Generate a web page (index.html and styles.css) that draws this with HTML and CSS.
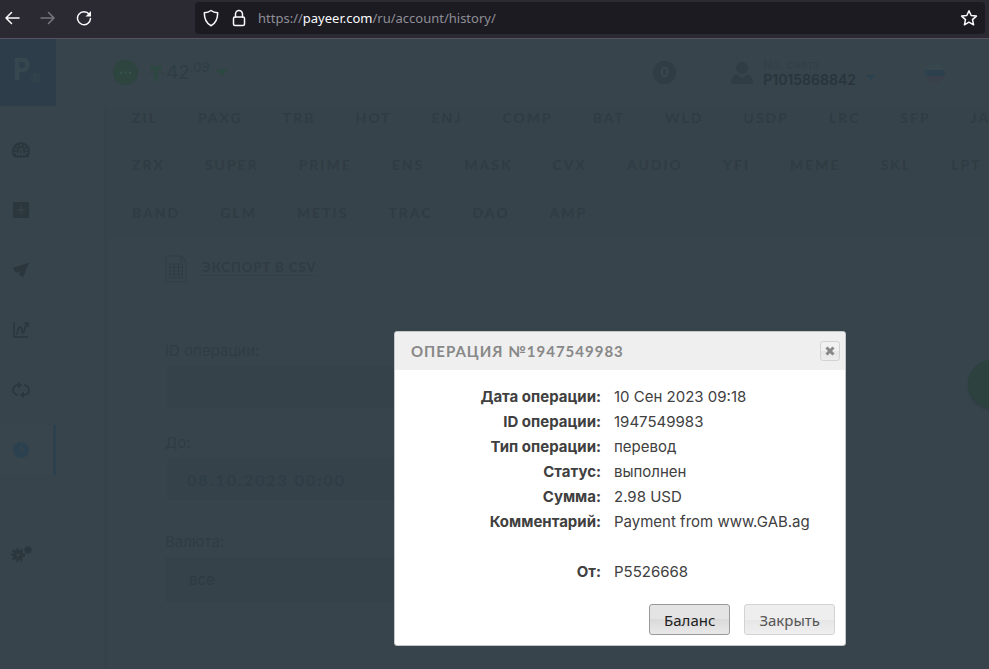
FILE: index.html
```
<!DOCTYPE html>
<html lang="ru">
<head>
<meta charset="utf-8">
<title>История операций</title>
<link rel="stylesheet" href="styles.css">
</head>
<body>
<header class="browser">
  <button class="nav-btn" aria-label="Назад"><svg width="16" height="16" viewBox="0 0 16 16"><path d="M15 8H2M7.500 2.500 2 8l5.500 5.500"/></svg></button>
  <button class="nav-btn nav-off" aria-label="Вперёд"><svg width="16" height="16" viewBox="0 0 16 16"><path d="M1 8h13M8.500 2.500 14 8l-5.500 5.500"/></svg></button>
  <button class="nav-btn" aria-label="Обновить"><svg width="16" height="16" viewBox="0 0 16 16"><path d="M13.200 4.300A6.500 6.500 0 1 0 14.500 8.500"/><path class="solid" d="M15 1v5.500H9.500z"/></svg></button>
  <div class="address">
    <svg width="18" height="18" viewBox="0 0 18 18"><path d="M9 1.500c2 1.500 4.300 2.100 6.700 2.300 0 6-1.700 10.500-6.700 12.900C4 14.300 2.300 9.800 2.300 3.800 4.700 3.600 7 3 9 1.500z"/></svg>
    <svg width="18" height="18" viewBox="0 0 18 18"><rect x="3.500" y="8" width="11" height="8.500" rx="1.500"/><path d="M5.500 8V5a3.500 3.500 0 0 1 7 0v3"/></svg>
    <span class="url">https://<b>payeer.com</b>/ru/account/history/</span>
    <button class="star" aria-label="В закладки"><svg width="18" height="18" viewBox="0 0 18 18"><path d="m9 1.700 2.200 4.800 5.200.6-3.900 3.500 1.100 5.200L9 13.200l-4.600 2.600 1.100-5.200L1.600 7.100l5.200-.6z"/></svg></button>
  </div>
</header>

<div class="app">
  <aside class="side">
    <a class="logo" href="#" aria-label="Payeer"><span>P</span><small>®</small></a>
    <nav class="menu">
      <a href="#" aria-label="Баланс"><svg width="18" height="16" viewBox="0 0 18 16"><path d="M9 0a9 9 0 0 0-9 9c0 3 1 5 2 6.500h14c1-1.500 2-3.500 2-6.500a9 9 0 0 0-9-9z"/><path class="cut wide" d="M9 2v2.500M5 3.500l1 2M13 3.500l-1 2M2 7l3 .8M16 7l-3 .8M2 10.500h3M16 10.500h-3M8.300 6 7 12h4L9.700 6M4 12.500h10"/></svg></a>
      <a href="#" aria-label="Пополнить"><svg width="16" height="16" viewBox="0 0 16 16"><rect width="16" height="16" rx="1"/><path class="cut" d="M8 4v8M4 8h8"/></svg></a>
      <a href="#" aria-label="Перевести"><svg width="16" height="16" viewBox="0 0 16 16"><path d="M16 .5 0 6l2.500 4.500L7 9.500 6 12.500l4 3z"/></svg></a>
      <a href="#" aria-label="Торги"><svg width="17" height="16" viewBox="0 0 17 16"><path class="line" d="M1 0v15h14M3 12c3 0 1-7 4-7s1 6 3 6 1-8 4-9M11.500 1H15v4"/></svg></a>
      <a href="#" aria-label="Обмен"><svg width="18" height="16" viewBox="0 0 18 16"><path class="line" d="M6 13C3 12.500 1 11 1 8s2-5 6-5M12 3c3 .5 5 2 5 5s-2 5-6 5"/><path d="m6 0 4 3-4 3.500zM12 9.500V16l-4-3z"/></svg></a>
      <a class="active" href="#" aria-label="История"><svg width="16" height="16" viewBox="0 0 16 16"><circle cx="8" cy="8" r="8"/><path class="cut wide" d="M8 3.500V8h3"/></svg></a>
      <a class="last" href="#" aria-label="Настройки"><svg width="21" height="16" viewBox="0 0 21 16"><circle cx="7" cy="9" r="5"/><circle class="teeth" cx="7" cy="9" r="5.500"/><circle cx="17" cy="4" r="2.700"/><circle class="teeth small" cx="17" cy="4" r="3"/><circle class="hole" cx="7" cy="9" r="1.500"/></svg></a>
    </nav>
  </aside>

  <div class="content">
    <div class="top">
      <span class="dots">•••</span>
      <svg class="tether" width="16" height="16" viewBox="0 0 16 16"><path d="M2 1h12v3.500H9.800V16H6.200V4.500H2z"/><path class="ring" d="M5 6C-1 7-1 9 8 9s9-2 3-3"/></svg>
      <span class="sum">42<sup>.09</sup></span>
      <i class="caret green"></i>
      <span class="count">0</span>
      <svg class="person" width="22" height="22" viewBox="0 0 22 22"><circle cx="11" cy="6" r="6"/><path d="M0 22c0-6 2-8.500 6-9.500l5 4 5-4c4 1 6 3.500 6 9.500z"/></svg>
      <span class="account"><small>No. счета</small><b>P1015868842</b></span>
      <i class="caret blue"></i>
      <span class="flag"></span>
    </div>

    <main class="panel">
      <div class="coins">
        <div class="coin-row"><span>ZIL</span><span>PAXG</span><span>TRB</span><span>HOT</span><span>ENJ</span><span>COMP</span><span>BAT</span><span>WLD</span><span>USDP</span><span>LRC</span><span>SFP</span><span>JASMY</span></div>
        <div class="coin-row"><span>ZRX</span><span>SUPER</span><span>PRIME</span><span>ENS</span><span>MASK</span><span>CVX</span><span>AUDIO</span><span>YFI</span><span>MEME</span><span>SKL</span><span>LPT</span></div>
        <div class="coin-row"><span>BAND</span><span>GLM</span><span>METIS</span><span>TRAC</span><span>DAO</span><span>AMP</span></div>
      </div>
      <form class="filter">
        <a class="export" href="#"><svg width="22" height="28" viewBox="0 0 22 28"><path d="M1 1h15l5 5v21H1zM16 1v5h5M4.500 9h13v14h-13zM9 9v14M13.500 9v14M4.500 12.500h13M4.500 16h13M4.500 19.500h13"/></svg><span>ЭКСПОРТ В CSV</span></a>
        <div class="field-row">
          <div class="field"><label for="op">ID операции:</label><input id="op" type="text"></div>
          <button class="round" type="button" aria-label="Показать"></button>
        </div>
        <div class="field"><label for="to">До:</label><input id="to" type="text" value="08.10.2023 00:00"></div>
        <div class="field"><label for="cur">Валюта:</label><select id="cur"><option>все</option></select></div>
      </form>
    </main>
  </div>
</div>

<section class="dialog" role="dialog" aria-labelledby="dlg-title">
  <div class="dialog-head">
    <h2 id="dlg-title">ОПЕРАЦИЯ №1947549983</h2>
    <button class="close" aria-label="Закрыть окно"><svg width="10" height="10" viewBox="0 0 10 10"><path d="m1.500 1.500 7 7M8.500 1.500l-7 7"/></svg></button>
  </div>
  <table class="details">
    <tr><th scope="row">Дата операции:</th><td>10 Сен 2023 09:18</td></tr>
    <tr><th scope="row">ID операции:</th><td>1947549983</td></tr>
    <tr><th scope="row">Тип операции:</th><td>перевод</td></tr>
    <tr><th scope="row">Статус:</th><td>выполнен</td></tr>
    <tr><th scope="row">Сумма:</th><td>2.98 USD</td></tr>
    <tr><th scope="row">Комментарий:</th><td>Payment from www.GAB.ag</td></tr>
    <tr class="from"><th scope="row">От:</th><td>P5526668</td></tr>
  </table>
  <div class="actions">
    <button class="btn primary">Баланс</button>
    <button class="btn">Закрыть</button>
  </div>
</section>
</body>
</html>
```
FILE: styles.css
```
* { box-sizing: border-box; }
body {
  margin: 0;
  height: 100vh;
  overflow: hidden;
  display: flex;
  flex-direction: column;
  background: #37444b;
  font-family: Inter, "Noto Sans", sans-serif;
}
button { margin: 0; padding: 0; border: 0; background: none; font: inherit; }
a { color: inherit; text-decoration: none; }
svg { display: block; flex: none; }

/* browser toolbar */
.browser {
  display: flex;
  align-items: center;
  gap: 20px;
  flex: none;
  height: 39px;
  padding: 0 4px 2px;
  background: #2b2a33;
  border-bottom: 1px solid #56525f;
}
.browser svg { fill: none; stroke: #fbfbfe; stroke-width: 1.5; stroke-linejoin: round; stroke-linecap: round; }
.browser .solid { fill: #fbfbfe; stroke: none; }
.nav-btn { width: 16px; }
.nav-btn.nav-off svg { stroke: #77767e; }
.address {
  flex: 1;
  display: flex;
  align-items: center;
  gap: 10px;
  height: 32px;
  margin-left: 83px;
  padding: 0 7px;
  border-radius: 4px;
  background: #1c1b22;
}
.url { flex: 1; color: #8f8e96; font: 13px "Noto Sans", sans-serif; }
.url b { font-weight: 400; color: #fbfbfe; }

/* page under the shade */
.app { flex: 1; display: flex; min-height: 0; }
.side { flex: none; width: 56px; }
.logo { display: flex; align-items: center; height: 67px; padding: 0 0 8px 12px; background: #2d3d49; color: #37474f; font: bold 30px "Open Sans", sans-serif; }
.logo small { align-self: flex-end; font: 12px "Open Sans", sans-serif; margin-bottom: 11px; }
.menu { display: flex; flex-direction: column; gap: 10px; padding-top: 19px; }
.menu a { display: flex; align-items: center; justify-content: center; height: 50px; padding-right: 14px; }
.menu .last { margin-top: 44px; }
.menu svg { fill: #2b363d; }
.menu .cut { fill: none; stroke: #37444b; stroke-width: 1; }
.menu .wide { stroke-width: 1.5; }
.menu .line { fill: none; stroke: #2b363d; stroke-width: 1.5; }
.menu .teeth { fill: none; stroke: #2b363d; stroke-width: 3; stroke-dasharray: 2 2; }
.menu .small { stroke-width: 2; stroke-dasharray: 1 1; }
.menu .hole { fill: #37444b; }
.menu .active { background: #38454c; border-right: 3px solid #2d404d; padding-right: 11px; }
.menu .active svg { fill: #2c4150; }

.content { flex: 1; min-width: 0; padding-left: 48px; }
.top { display: flex; align-items: center; height: 67px; padding-right: 44px; }
.dots { width: 25px; height: 25px; margin: 0 10px 0 9px; border-radius: 50%; background: #2d443f; color: #36534a; font-size: 8px; line-height: 25px; text-align: center; }
.tether { fill: #2d4840; }
.tether .ring { fill: none; stroke: #2d4840; stroke-width: 0.7; }
.sum { margin-left: 2px; color: #2e3e44; font: 19px Inter, sans-serif; line-height: 24px; }
.sum sup { font-size: 13px; line-height: 0; }
.caret { width: 0; height: 0; border: 6px solid transparent; border-bottom: 0; border-top-width: 7px; }
.green { margin-left: 6px; border-top-color: #2d4840; }
.count { width: 23px; height: 23px; margin-left: auto; border-radius: 50%; background: #303d45; color: #3a484f; font-weight: 700; font-size: 13px; line-height: 23px; text-align: center; }
.person { margin: 0 10px 0 55px; fill: #303d45; }
.account { display: flex; flex-direction: column; color: #323f47; }
.account small { font-size: 12px; line-height: 14px; }
.account b { color: #29353d; font-size: 14px; font-weight: 600; line-height: 15px; }
.blue { margin: 10px 0 0 10px; border-width: 5px 5px 0; border-top-color: #2b414d; }
.flag { width: 20px; height: 20px; margin-left: 49px; border-radius: 50%; background: linear-gradient(#38464d 7px, #2c404e 7px 13px, #3a4049 13px); }

.panel { background: #36434a; border-left: 1px solid #354148; }
.coins { padding: 0 0 1px 27px; overflow: hidden; }
.coin-row { display: flex; gap: 40px; font: bold 14px Lato, sans-serif; line-height: 48px; letter-spacing: 2px; color: #303c44; white-space: nowrap; }
.coin-row:first-child { line-height: 24px; padding-bottom: 11px; }
.filter { height: 434px; margin-left: 4px; padding: 17px 0 0 56px; background: #37444b; color: #303c44; }
.export { display: flex; align-items: center; gap: 15px; height: 28px; font: bold 13px Lato, sans-serif; letter-spacing: 1px; }
.export svg { fill: none; stroke: #2f3c44; }
.export span { margin-bottom: 4px; border-bottom: 1px dotted #303c44; }
.field-row { display: flex; align-items: center; justify-content: space-between; margin-top: 57px; }
.field { display: flex; flex-direction: column; width: 400px; }
.field-row + .field { margin-top: 25px; }
.field + .field { margin-top: 32px; }
label { font-size: 15px; line-height: 20px; }
.field input, .field select { height: 42px; margin: 5px 2px 0; padding: 0 20px; border: 0; border-radius: 3px; background: #35424a; color: #2e3d46; font: bold 16px Lato, sans-serif; letter-spacing: 2px; }
.field select { height: 45px; margin: 5px 0 0; padding: 0 24px; appearance: none; color: #2e3a42; font: 15px Inter, sans-serif; letter-spacing: 0; }
.round { flex: none; width: 48px; height: 48px; margin: 20px -27px 0 0; border-radius: 50%; background: #2d413e; box-shadow: 0 2px 2px #313d44; }

/* operation dialog */
.dialog {
  position: absolute;
  left: 394px;
  top: 331px;
  width: 452px;
  padding-bottom: 10px;
  border: 1px solid #c4c7c9;
  border-radius: 3px;
  background: #fff;
  color: #404040;
  font-size: 15px;
}
.dialog-head { display: flex; align-items: center; justify-content: space-between; height: 38px; padding: 0 5px 0 16px; background: #efefef; border-radius: 2px 2px 0 0; }
.dialog h2 { margin: 0; color: #888; font: bold 15px Lato, sans-serif; letter-spacing: 1px; }
.close { display: flex; align-items: center; justify-content: center; width: 20px; height: 20px; border: 1px solid #d3d3d3; border-radius: 3px; background: linear-gradient(#f1f1f1 50%, #e6e6e6 50%, #ededed); }
.close path { stroke: #888; stroke-width: 3; }
.details { width: 100%; margin-top: 14px; border-collapse: collapse; table-layout: fixed; }
.details th, .details td { height: 25px; padding: 0; line-height: 25px; }
.details th { width: 206px; text-align: right; font-weight: 700; }
.details td { padding-left: 13px; }
.details .from th, .details .from td { padding-top: 25px; }
.actions { display: flex; justify-content: flex-end; gap: 14px; margin-top: 20px; padding-right: 10px; }
.btn { height: 31px; padding: 0 14px; border: 1px solid #d3d3d3; border-radius: 3px; background: linear-gradient(#eee 50%, #e6e6e6 50%, #efefef); color: #555; font: 15px "Noto Sans", sans-serif; }
.primary { border-color: #999; background: linear-gradient(#e4e4e4 50%, #dadada 50%, #e8e8e8); color: #212121; }
```
